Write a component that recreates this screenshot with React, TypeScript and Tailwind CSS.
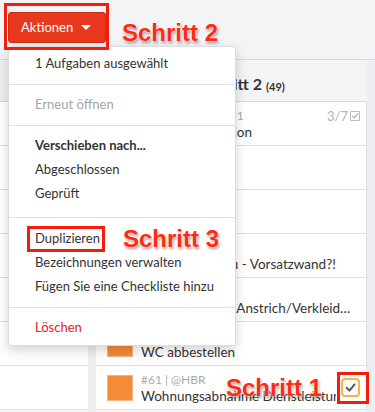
import React from 'react';

type Card = { meta: string; title: string; truncate?: boolean; badge?: string; check?: boolean };

const cards: Card[] = [
  { meta: '#147 | @Elektro1-1', title: 'Lüftung Inspektion', badge: '3/7' },
  { meta: '#52 | @HBR', title: 'Fenster prüfen' },
  { meta: '#55 | @HBR', title: 'Türzarge Bad' },
  { meta: '#57 | @HBR', title: 'Bad nie maßtreu - Vorsatzwand?!' },
  { meta: '#59 | @HBR', title: 'Rohrleitung Hk. Anstrich/Verkleidung fehlt noch', truncate: true },
  { meta: '#60 | @HBR', title: 'WC abbestellen' },
  { meta: '#61 | @HBR', title: 'Wohnungsabnahme Dienstleistung', check: true },
];

function CheckMark({ className }: { className?: string }) {
  return (
    <svg viewBox="0 0 12 12" className={className} fill="none">
      <path d="M2.5 6.3 L5 8.8 L9.8 3.2" stroke="currentColor" strokeWidth="1.8" strokeLinecap="round" strokeLinejoin="round" />
    </svg>
  );
}

function MenuItem({ children, className = '' }: { children: React.ReactNode; className?: string }) {
  return <div className={`h-[24px] flex items-center pl-[26px] text-[13px] text-[#333] ${className}`}>{children}</div>;
}

const note = "absolute font-['Liberation_Sans',Arial,sans-serif] font-bold text-[24px] leading-none text-[#ff2a12] [text-shadow:0_0_2px_#fff,0_0_2px_#fff,1px_2px_3px_rgba(0,0,0,0.45)]";

export default function App() {
  return (
    <div className="relative w-[375px] h-[412px] overflow-hidden bg-[#f3f4f6] font-['Lato','Noto_Sans',sans-serif]">
      {/* Top bar */}
      <div className="h-[60px] border-b border-[#d5d7da] pl-2 pt-3">
        <button className="w-[98px] h-[31px] rounded-[3px] bg-[#e8381d] border border-[#cf2c14] flex items-center pl-[12px] gap-[8px] text-white text-[13px]">
          <span>Aktionen</span>
          <span className="w-0 h-0 border-l-[5px] border-r-[5px] border-t-[5px] border-l-transparent border-r-transparent border-t-white" />
        </button>
      </div>

      {/* Columns */}
      <div className="flex h-[352px]">
        <div className="w-[88px] flex flex-col">
          <div className="h-[42px] shrink-0 border-b border-[#d8d9dc] bg-[#eef0f2]" />
          {cards.map((_, i) => (
            <div key={i} className="h-[44px] shrink-0 bg-white border-b border-[#dedfe1]" />
          ))}
        </div>
        <div className="w-[8px] bg-[#eceef1]" />
        <div className="w-[271px] flex flex-col">
          <div className="h-[42px] shrink-0 border-b border-[#d8d9dc] flex items-end pb-[5px] pl-[60px] text-[#333]">
            <span className="font-bold text-[16px]">Bauabschnitt 2</span>
            <span className="font-bold text-[11px] ml-[4px] mb-[1px]">(49)</span>
          </div>
          {cards.map((c, i) => (
            <div key={i} className="h-[44px] shrink-0 bg-white border-b border-[#dedfe1] border-r flex items-center pl-[11px] pr-[9px]">
              <div className="w-[26px] h-[26px] shrink-0 bg-[#f68b37] border border-[#f0b48a]" />
              <div className="ml-[8px] flex-1 min-w-0 leading-[16px]">
                <div className="flex justify-between text-[12px] text-[#aaa]">
                  <span>{c.meta}</span>
                  {c.badge && (
                    <span className="-mr-[3px] flex items-center gap-[2px] text-[13px] text-[#b3b3b3]">
                      {c.badge}
                      <span className="w-[10px] h-[10px] border border-[#bbb] rounded-[1px] flex items-center justify-center">
                        <CheckMark className="w-[8px] h-[8px] text-[#aaa]" />
                      </span>
                    </span>
                  )}
                </div>
                <div className={`text-[13.5px] text-[#333] ${c.truncate ? 'truncate' : 'whitespace-nowrap overflow-hidden'}`}>{c.title}</div>
              </div>
              {c.check && (
                <span className="ml-[5px] -mr-[3px] w-[19px] h-[19px] shrink-0 rounded-[4px] border-2 border-[#f6b545] bg-[#fbfbfb] flex items-center justify-center">
                  <CheckMark className="w-[13px] h-[13px] text-[#555]" />
                </span>
              )}
            </div>
          ))}
        </div>
        <div className="w-[8px] bg-[#eceef1]" />
      </div>

      {/* Dropdown menu */}
      <div className="absolute left-[8px] top-[46px] w-[228px] bg-white rounded-[3px] border border-[#dcdcdc] shadow-[0_4px_12px_rgba(0,0,0,0.18)]">
        <div className="h-[38px] flex items-center pl-[26px] pb-[4px] text-[13px] text-[#333] border-b border-[#e2e2e2]">1 Aufgaben ausgewählt</div>
        <div className="h-[41px] flex items-center pl-[26px] text-[13px] text-[#a5a5a5] border-b border-[#e2e2e2]">Erneut öffnen</div>
        <div className="pt-[8px] pb-[11px] border-b border-[#e2e2e2]">
          <MenuItem className="font-bold">Verschieben nach...</MenuItem>
          <MenuItem>Abgeschlossen</MenuItem>
          <MenuItem>Geprüft</MenuItem>
        </div>
        <div className="pt-[9px] pb-[8px] border-b border-[#e2e2e2]">
          <MenuItem>Duplizieren</MenuItem>
          <MenuItem>Bezeichnungen verwalten</MenuItem>
          <MenuItem>Fügen Sie eine Checkliste hinzu</MenuItem>
        </div>
        <div className="h-[37px] flex items-center pl-[26px] pt-[3px] text-[13px] text-[#e8201c]">Löschen</div>
      </div>

      {/* Annotations */}
      <div className="absolute left-[4px] top-[3px] w-[105px] h-[47px] border-[3px] border-[#f41d0c]" />
      <div className="absolute left-[27px] top-[226px] w-[78px] h-[26px] border-[3px] border-[#f41d0c]" />
      <div className="absolute left-[337px] top-[372px] w-[32px] h-[32px] border-[3px] border-[#f41d0c]" />
      <div className={`${note} left-[122px] top-[21px]`}>Schritt 2</div>
      <div className={`${note} left-[123px] top-[227px]`}>Schritt 3</div>
      <div className={`${note} left-[226px] top-[376px]`}>Schritt 1</div>
    </div>
  );
}
